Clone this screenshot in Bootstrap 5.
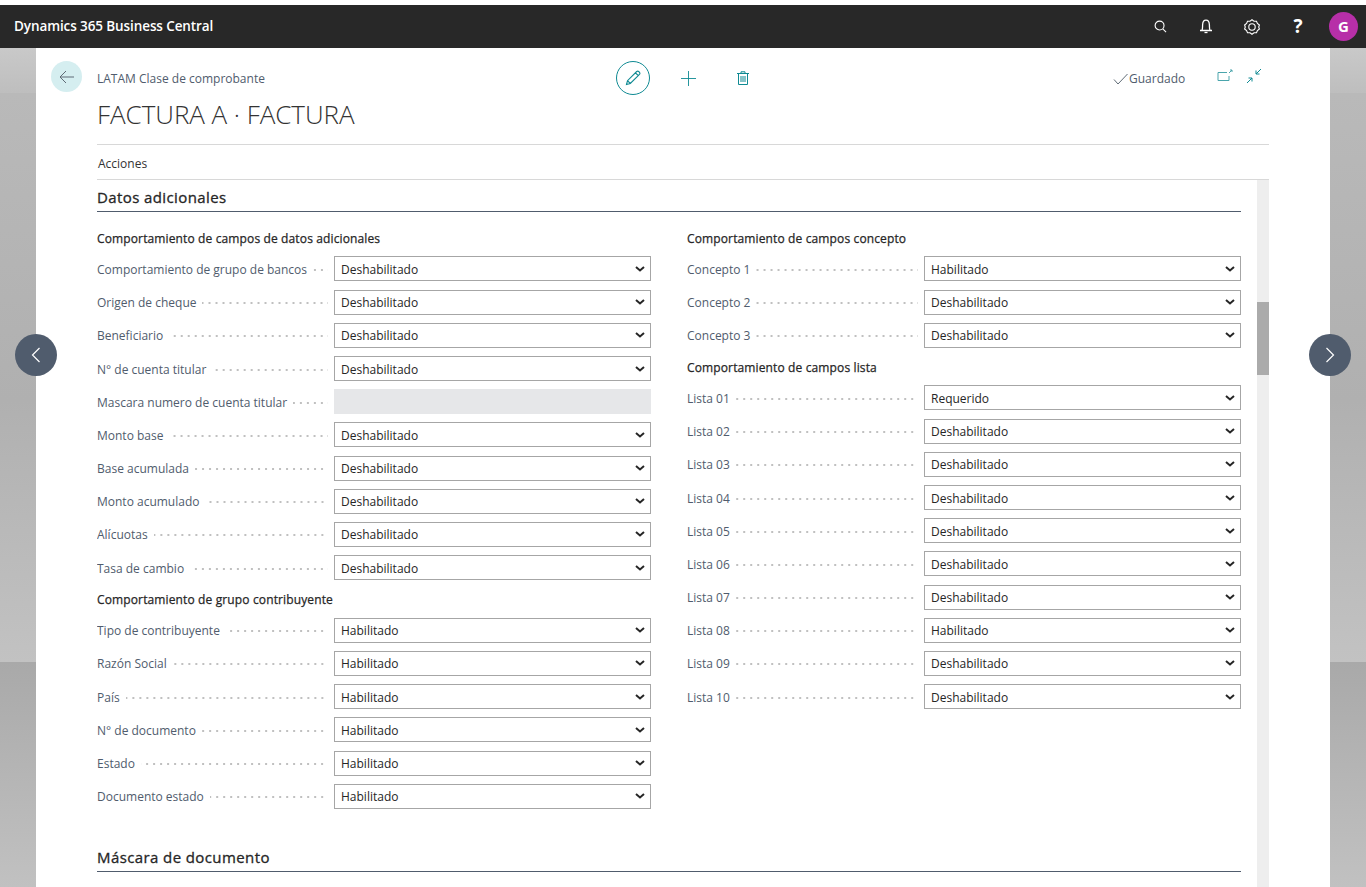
<!DOCTYPE html>
<html lang="es">
<head>
<meta charset="utf-8">
<title>Dynamics 365 Business Central</title>
<link href="https://cdn.jsdelivr.net/npm/bootstrap@5.3.0/dist/css/bootstrap.min.css" rel="stylesheet">
<style>
html,body{height:887px;overflow:hidden;}
body{font-family:"Open Sans","Liberation Sans",sans-serif;font-size:12px;color:#212121;background:#fff;position:relative;padding-top:5px;}
.bc-top{height:43px;background:#282828;color:#fff;padding:0 8px 0 14px;}
.bc-brand{font-size:13.5px;font-weight:600;letter-spacing:-.1px;}
.bc-ti{width:46px;height:43px;display:flex;align-items:center;justify-content:center;}
.bc-avatar{width:29px;height:29px;border-radius:50%;background:#b72fa8;color:#fff;font-weight:700;font-size:15px;display:flex;align-items:center;justify-content:center;margin-left:8px;}
.bc-stage{height:839px;padding:0 36px;background:linear-gradient(to bottom,#c9c9c9 0,#bebebe 45px,#b9b9b9 45px,#b0b0b0 352px,#c2c2c2 614px,#a9a9a9 614px,#c1c1c1 100%);}
.bc-sheet{background:#fff;height:839px;position:relative;padding:0 61px 0 61px;}
.bc-back{position:absolute;left:15px;top:13px;width:31px;height:31px;border-radius:50%;background:#d5eef0;display:flex;align-items:center;justify-content:center;}
.bc-head{height:96px;position:relative;}
.bc-crumb{position:absolute;left:0;top:23px;color:#505c6d;font-size:12px;line-height:16px;}
.bc-title{position:absolute;left:0;top:48px;font-size:26px;font-weight:300;color:#333;line-height:36px;margin:0;letter-spacing:-.05px;}
.bc-cmds{position:absolute;left:519px;top:13px;}
.bc-edit{width:34px;height:34px;border-radius:50%;border:1px solid #0f8a93;display:flex;align-items:center;justify-content:center;}
.bc-cmd{width:20px;height:34px;display:flex;align-items:center;justify-content:center;}
.bc-cmd-add{margin-left:28px;}
.bc-cmd-del{margin-left:35px;}
.bc-saved{position:absolute;left:1016px;top:23px;color:#505c6d;line-height:16px;font-size:12px;gap:1px;}
.bc-win{position:absolute;left:1120px;top:20px;gap:13px;}
.bc-actions{height:36px;border-top:1px solid #d8d8d8;border-bottom:1px solid #d8d8d8;line-height:37px;font-size:12px;padding-left:1px;color:#333;}
.bc-body{height:707px;overflow:hidden;}
.bc-scroll{width:1144px;padding-top:5px;}
.bc-rail{width:12px;margin-left:16px;background:#eeeeee;height:707px;padding-top:122px;}
.bc-thumb{height:73px;background:#ababab;}
.bc-sec{font-size:15px;font-weight:400;-webkit-text-stroke:.3px #262626;color:#262626;line-height:24px;border-bottom:1px solid #505c6d;height:27px;letter-spacing:.4px;}
.bc-sec-2{margin-top:31px;}
.bc-cols{gap:36px;padding-top:12px;}
.bc-col{width:554px;}
.bc-sub{font-size:12px;font-weight:400;-webkit-text-stroke:.25px #262626;line-height:30px;height:29.4px;color:#262626;letter-spacing:.13px;}
.bc-row{height:33.2px;display:flex;align-items:center;}
.bc-lab{color:#505c6d;white-space:nowrap;margin-right:6px;}
.bc-dots{flex:1;height:2px;background:radial-gradient(circle at 1px 1px,#c0c0c0 .8px,transparent 1px) right top/7px 2px repeat-x;margin-right:6px;}
.bc-sel{width:317px;height:25px;flex:none;margin-bottom:2px;padding:2px 0 0 6px;border:1px solid #a6a6a6;border-radius:0;font-size:12px;color:#262626;background-size:10px 6px;background-position:right 5px center;font-family:inherit;background-image:url("data:image/svg+xml,%3csvg xmlns='http://www.w3.org/2000/svg' viewBox='0 0 10 6'%3e%3cpath fill='none' stroke='%23262626' stroke-width='2' d='M1 1l4 3.500L9 1'/%3e%3c/svg%3e");}
.bc-off{width:317px;height:25px;flex:none;margin-bottom:2px;background:#e6e7e9;}
.bc-nav{position:absolute;top:334px;width:42px;height:42px;border-radius:50%;background:#505c6d;display:flex;align-items:center;justify-content:center;}
.bc-nav-l{left:15px;}
.bc-nav-r{left:1309px;}
.bc-q{font-size:19px;font-weight:700;line-height:1;}
</style>
</head>
<body>
<header class="bc-top d-flex align-items-center justify-content-between">
  <div class="bc-brand">Dynamics 365 Business Central</div>
  <div class="d-flex align-items-center">
    <div class="bc-ti"><svg width="13" height="13" viewBox="0 0 14 14" fill="none" stroke="#fff" stroke-width="1.2"><circle cx="6" cy="6" r="4.8"/><path d="M9.500 9.500L13 13"/></svg></div>
    <div class="bc-ti"><svg width="14" height="15" viewBox="0 0 14 15" fill="none" stroke="#fff" stroke-width="1.3"><path d="M1 11.500h12M2.800 11.500c1-1.500.7-3.500.8-5.500C3.700 3.300 5 1.200 7 1.200s3.300 2.100 3.400 4.800c.1 2-.2 4 .8 5.500"/><path d="M5.500 13.500h3"/></svg></div>
    <div class="bc-ti"><svg width="16" height="16" viewBox="0 0 16 16" fill="none" stroke="#fff" stroke-width="1.1"><path d="M8 .8l2 1.500 2.500-.1.900 2.300 2 1.500-.7 2 .7 2-2 1.500-.9 2.300-2.500-.1-2 1.500-2-1.500-2.500.1-.9-2.300-2-1.500.7-2-.7-2 2-1.500.9-2.300 2.500.1z"/><circle cx="8" cy="8" r="3.200"/></svg></div>
    <div class="bc-ti"><span class="bc-q">?</span></div>
    <div class="bc-avatar">G</div>
  </div>
</header>
<div class="bc-stage">
  <main class="bc-sheet">
    <div class="bc-back"><svg width="16" height="14" viewBox="0 0 16 14" fill="none" stroke="#5f6b76" stroke-width="1"><path d="M15 7H1M7 1L1 7l6 6"/></svg></div>
    <div class="bc-head">
      <div class="bc-crumb">LATAM Clase de comprobante</div>
      <h1 class="bc-title">FACTURA A · FACTURA</h1>
      <div class="bc-cmds d-flex align-items-center">
        <div class="bc-edit"><svg width="16" height="16" viewBox="0 0 16 16" fill="none" stroke="#0f8a93" stroke-width="1.1"><path d="M1.500 14.500l1-3.800L11.700 1.500c.7-.6 1.300-.6 2 0l.8.800c.6.700.6 1.300 0 2L5.300 13.500zM2.500 10.700l2.800 2.800M10.500 2.800l2.700 2.700"/></svg></div>
        <div class="bc-cmd bc-cmd-add"><svg width="15" height="15" viewBox="0 0 15 15" fill="none" stroke="#0f8a93" stroke-width=".9"><path d="M7.500 0v15M0 7.500h15"/></svg></div>
        <div class="bc-cmd bc-cmd-del"><svg width="12" height="14" viewBox="0 0 12 14" fill="none" stroke="#0f8a93" stroke-width="1"><path d="M0 2.500h12M4 2.500V.8h4v1.700M1.500 2.500v11h9v-11M4 5v6M6 5v6M8 5v6"/></svg></div>
      </div>
      <div class="bc-saved d-flex align-items-center"><svg width="15" height="12" viewBox="0 0 15 12" fill="none" stroke="#5f6b76" stroke-width="1"><path d="M1 6.500L5 11 14.500 1"/></svg><span>Guardado</span></div>
      <div class="bc-win d-flex align-items-center">
        <svg width="16" height="14" viewBox="0 0 16 14" fill="none" stroke="#4aa5ac" stroke-width="1"><path d="M10 3.500H1v8h11V7"/><path d="M12 4l3-3M13 1h2v2"/></svg>
        <svg width="16" height="16" viewBox="0 0 16 16" fill="none" stroke="#0f8a93" stroke-width="1"><path d="M15 1L10 6M10 2.500V6h3.500M1 15l5-5M2.500 10H6v3.500"/></svg>
      </div>
    </div>
    <div class="bc-actions">Acciones</div>
    <div class="bc-body d-flex">
      <div class="bc-scroll">
        <div class="bc-sec">Datos adicionales</div>
        <div class="bc-cols d-flex">
          <div class="bc-col" id="c1"></div>
          <div class="bc-col" id="c2"></div>
        </div>
        <div class="bc-sec bc-sec-2">Máscara de documento</div>
      </div>
      <div class="bc-rail"><div class="bc-thumb"></div></div>
    </div>
  </main>
</div>
<div class="bc-nav bc-nav-l"><svg width="10" height="16" viewBox="0 0 10 16" fill="none" stroke="#fff" stroke-width="1.200"><path d="M8.500 1L1.500 8l7 7"/></svg></div>
<div class="bc-nav bc-nav-r"><svg width="10" height="16" viewBox="0 0 10 16" fill="none" stroke="#fff" stroke-width="1.200"><path d="M1.500 1l7 7-7 7"/></svg></div>
<script>
const D='Deshabilitado',H='Habilitado',R='Requerido';
const left=[['s','Comportamiento de campos de datos adicionales'],['Comportamiento de grupo de bancos',D],['Origen de cheque',D],['Beneficiario',D],['N° de cuenta titular',D],['Mascara numero de cuenta titular',null],['Monto base',D],['Base acumulada',D],['Monto acumulado',D],['Alícuotas',D],['Tasa de cambio',D],['s','Comportamiento de grupo contribuyente'],['Tipo de contribuyente',H],['Razón Social',H],['País',H],['N° de documento',H],['Estado',H],['Documento estado',H]];
const right=[['s','Comportamiento de campos concepto'],['Concepto 1',H],['Concepto 2',D],['Concepto 3',D],['s','Comportamiento de campos lista'],['Lista 01',R],['Lista 02',D],['Lista 03',D],['Lista 04',D],['Lista 05',D],['Lista 06',D],['Lista 07',D],['Lista 08',H],['Lista 09',D],['Lista 10',D]];
function fill(id,a){const c=document.getElementById(id);c.innerHTML=a.map(r=>{
 if(r[0]==='s')return `<div class="bc-sub">${r[1]}</div>`;
 const ctl=r[1]?`<select class="form-select bc-sel"><option>${r[1]}</option></select>`:`<div class="bc-off"></div>`;
 return `<div class="bc-row"><span class="bc-lab">${r[0]}</span><span class="bc-dots"></span>${ctl}</div>`}).join('');}
fill('c1',left);fill('c2',right);
</script>
<script src="https://cdn.jsdelivr.net/npm/bootstrap@5.3.0/dist/js/bootstrap.bundle.min.js"></script>
</body>
</html>
